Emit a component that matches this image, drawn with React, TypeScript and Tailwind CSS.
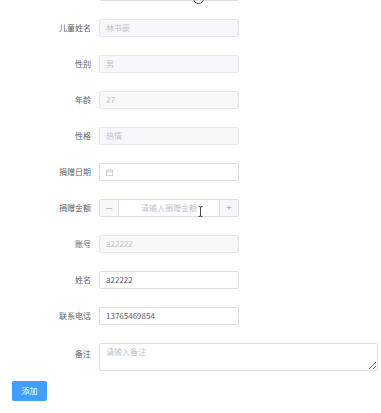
import React from 'react'

const font = { fontFamily: '"Noto Sans CJK SC", "Noto Sans", sans-serif' }

function Row({ label, children, top }: { label: string; children: React.ReactNode; top?: boolean }) {
  return (
    <div className={`flex ${top ? 'items-start' : 'items-center'}`}>
      <div className={`w-[91px] shrink-0 text-right text-[8px] leading-[18px] text-[#606266] ${top ? 'pt-[2px]' : ''}`}>
        {label}
      </div>
      <div className="ml-[8px]">{children}</div>
    </div>
  )
}

function Field({ value, placeholder, disabled }: { value?: string; placeholder?: string; disabled?: boolean }) {
  return (
    <div
      className={`flex h-[18px] w-[140px] items-center rounded-[2px] border px-[6px] text-[8px] ${
        disabled ? 'border-[#e4e7ed] bg-[#f5f7fa] text-[#c0c4cc]' : 'border-[#dcdfe6] bg-white text-[#606266]'
      }`}
    >
      {value ? value : <span className="text-[#c0c4cc]">{placeholder}</span>}
    </div>
  )
}

export default function App() {
  return (
    <div className="relative h-[413px] w-[381px] overflow-hidden bg-white" style={font}>
      <div className="flex flex-col gap-[18px]">
        {/* partially scrolled input */}
        <div className="relative -mt-[17px] ml-[99px] h-[18px] w-[140px] rounded-[2px] border border-[#dcdfe6]">
          <div className="absolute left-[93px] top-[9px] h-[11px] w-[11px] rounded-full border border-[#555]" />
        </div>

        <Row label="儿童姓名">
          <Field disabled value="林书豪" />
        </Row>
        <Row label="性别">
          <Field disabled value="男" />
        </Row>
        <Row label="年龄">
          <Field disabled value="27" />
        </Row>
        <Row label="性格">
          <Field disabled value="热情" />
        </Row>
        <Row label="捐赠日期">
          <div className="flex h-[18px] w-[140px] items-center rounded-[2px] border border-[#dcdfe6] bg-white px-[6px]">
            <svg width="7" height="7" viewBox="0 0 10 10" fill="none" stroke="#c0c4cc" strokeWidth="1">
              <rect x="0.5" y="1.5" width="9" height="8" />
              <line x1="0.5" y1="4" x2="9.5" y2="4" />
              <line x1="3" y1="0" x2="3" y2="2.5" />
              <line x1="7" y1="0" x2="7" y2="2.5" />
            </svg>
          </div>
        </Row>
        <Row label="捐赠金额">
          <div className="relative flex h-[18px] w-[140px] items-stretch rounded-[2px] border border-[#dcdfe6] bg-white text-[8px]">
            <div className="flex w-[19px] items-center justify-center border-r border-[#dcdfe6] bg-[#f5f7fa] text-[#909399]">—</div>
            <div className="flex flex-1 items-center justify-center text-[#c0c4cc]">请输入捐赠金额</div>
            <div className="flex w-[19px] items-center justify-center border-l border-[#dcdfe6] bg-[#f5f7fa] text-[9px] text-[#909399]">+</div>
            <svg className="absolute left-[98px] top-[6px]" width="5" height="11" viewBox="0 0 5 11" fill="none" stroke="#333" strokeWidth="0.9">
              <line x1="2.5" y1="1" x2="2.5" y2="10" />
              <path d="M0.5 0.5 Q2.5 1 4.5 0.5" />
              <path d="M0.5 10.5 Q2.5 10 4.5 10.5" />
            </svg>
          </div>
        </Row>
        <Row label="账号">
          <Field disabled value="a22222" />
        </Row>
        <Row label="姓名">
          <Field value="a22222" />
        </Row>
        <Row label="联系电话">
          <Field value="13765469854" />
        </Row>
        <Row label="备注" top>
          <textarea
            readOnly
            placeholder="请输入备注"
            className="block h-[28px] w-[279px] resize-y rounded-[2px] border border-[#dcdfe6] bg-white px-[6px] py-[2px] text-[8px] leading-[12px] text-[#606266] outline-none placeholder:text-[#c0c4cc]"
            style={font}
          />
        </Row>
        <div className="-mt-[8px] pl-[12px]">
          <button className="block h-[20px] w-[35px] rounded-[2px] bg-[#409eff] text-[8px] text-white">添加</button>
        </div>
      </div>
    </div>
  )
}
